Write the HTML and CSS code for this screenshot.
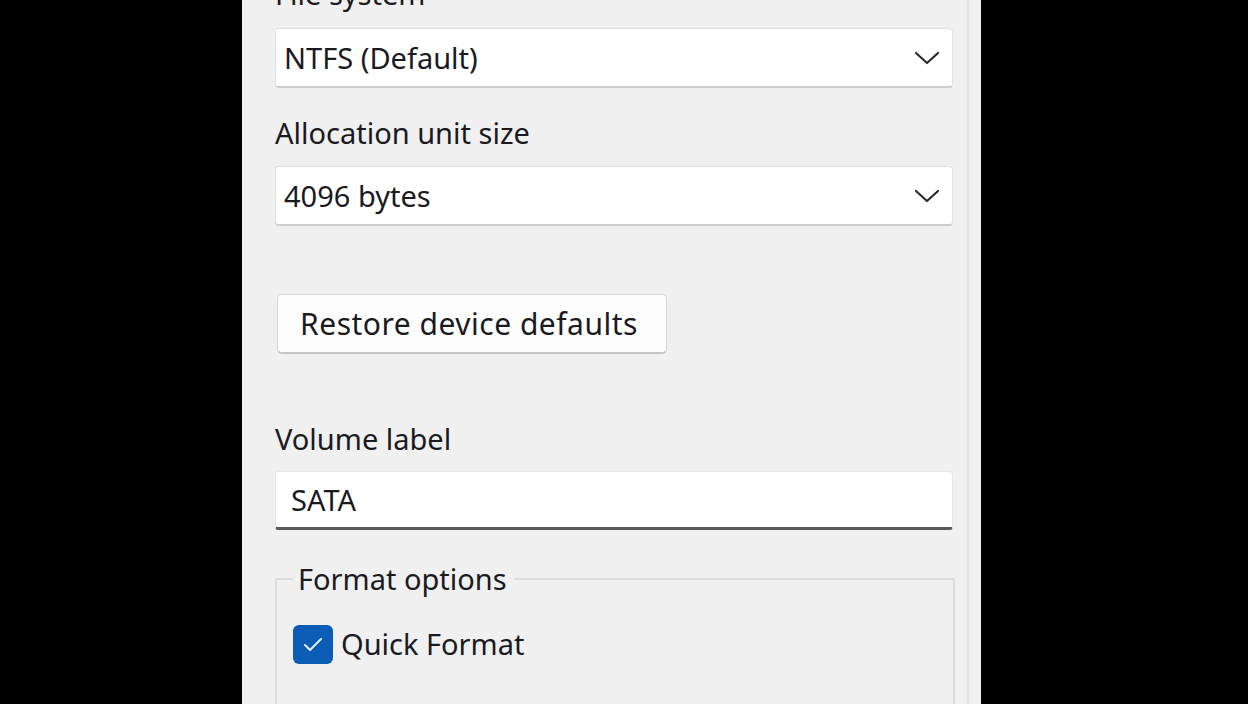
FILE: index.html
```html
<!DOCTYPE html>
<html lang="en">
<head>
<meta charset="utf-8">
<title>Format</title>
<link rel="stylesheet" href="styles.css">
</head>
<body>
<div class="panel">
  <div class="content">
    <div class="label first">File system</div>
    <div class="select">
      <span>NTFS (Default)</span>
      <svg class="chev" width="26" height="16" viewBox="0 0 26 16"><polyline points="2,3 13,13 24,3" fill="none" stroke="#2b2b2b" stroke-width="2.2" stroke-linecap="round" stroke-linejoin="round"/></svg>
    </div>
    <div class="label gap-top">Allocation unit size</div>
    <div class="select">
      <span>4096 bytes</span>
      <svg class="chev" width="26" height="16" viewBox="0 0 26 16"><polyline points="2,3 13,13 24,3" fill="none" stroke="#2b2b2b" stroke-width="2.2" stroke-linecap="round" stroke-linejoin="round"/></svg>
    </div>
    <div class="btn">Restore device defaults</div>
    <div class="label vol">Volume label</div>
    <div class="textbox">SATA</div>
    <fieldset class="group">
      <legend>Format options</legend>
      <div class="check-row">
        <span class="checkbox"><svg width="40" height="39" viewBox="0 0 40 39"><polyline points="12,20 17,25 28,14" fill="none" stroke="#e8f1fb" stroke-width="2" stroke-linecap="round" stroke-linejoin="round"/></svg></span>
        <span class="check-label">Quick Format</span>
      </div>
    </fieldset>
  </div>
</div>
</body>
</html>
```

FILE: styles.css
```css
html, body {
  margin: 0;
  padding: 0;
  background: #000;
  height: 704px;
  overflow: hidden;
}
body {
  display: flex;
  padding-left: 242px;
  font-family: "Noto Sans", "Open Sans", sans-serif;
  font-size: 29px;
  color: #1a1a1f;
}
.panel {
  width: 739px;
  height: 704px;
  background: #f0f0f0;
  box-shadow: inset -12px 0 0 #f0f0f0, inset -14px 0 0 #e3e3e3;
  overflow: hidden;
}
.content {
  display: flex;
  flex-direction: column;
  align-items: flex-start;
  padding-left: 33px;
  width: 680px;
}
.label {
  line-height: 40px;
  height: 40px;
  letter-spacing: 0;
}
.label.first {
  margin-top: -26px;
  margin-bottom: 14px;
}
.label.gap-top {
  margin-top: 25px;
  margin-bottom: 13px;
}
.select {
  box-sizing: border-box;
  width: 678px;
  height: 60px;
  background: #fff;
  border: 1px solid #e0e0e0;
  border-bottom: 2px solid #cdcdcd;
  border-radius: 4px;
  display: flex;
  align-items: center;
  justify-content: space-between;
  padding: 0 12px 0 8px;
}
.chev {
  margin-top: 1px;
}
.btn {
  box-sizing: border-box;
  margin-top: 68px;
  margin-left: 2px;
  width: 390px;
  height: 60px;
  background: #fdfdfd;
  border: 1px solid #d6d6d6;
  border-bottom: 2px solid #c4c4c4;
  border-radius: 5px;
  display: flex;
  align-items: center;
  justify-content: center;
  padding-right: 6px;
  font-size: 30px;
  letter-spacing: 0.5px;
}
.label.vol {
  margin-top: 65px;
  margin-bottom: 12px;
}
.textbox {
  box-sizing: border-box;
  width: 678px;
  height: 59px;
  background: #fff;
  border: 1px solid #e6e6e6;
  border-bottom: 3px solid #5b5b5b;
  border-radius: 3px;
  display: flex;
  align-items: center;
  padding-left: 15px;
}
.group {
  box-sizing: border-box;
  margin: 29px 0 0 0;
  width: 680px;
  min-height: 300px;
  border: 2px solid #dcdcdc;
  border-radius: 2px;
  padding: 25px 16px 0 16px;
}
.group legend {
  line-height: 40px;
  padding: 0 7px 0 5px;
}
.check-row {
  display: flex;
  align-items: center;
  gap: 8px;
}
.checkbox {
  width: 40px;
  height: 39px;
  border-radius: 6px;
  background: #0b5cb5;
  display: block;
}
.checkbox svg {
  display: block;
}
.check-label {
  line-height: 40px;
}
```
